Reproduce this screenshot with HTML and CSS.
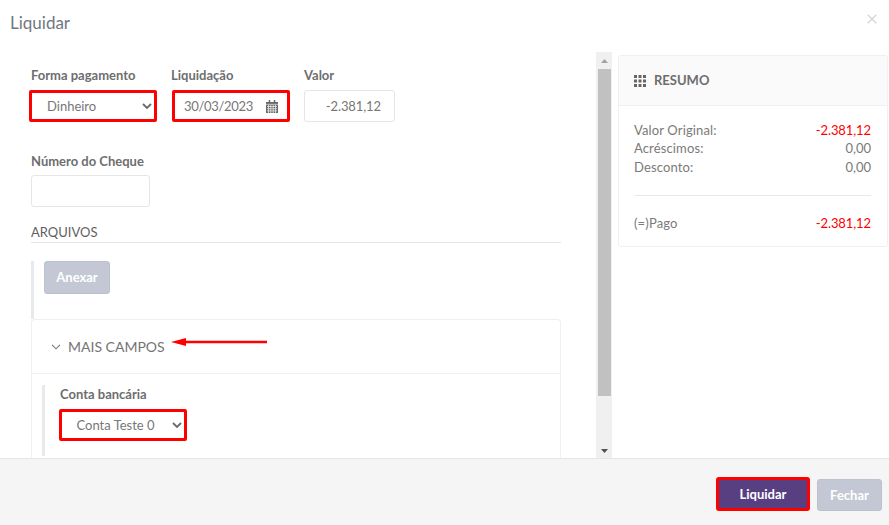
FILE: index.html
```html
<!DOCTYPE html>
<html lang="pt">
<head>
<meta charset="utf-8">
<title>Liquidar</title>
<link rel="stylesheet" href="styles.css">
</head>
<body>
<div class="modal">
  <header class="head">
    <h1 class="title">Liquidar</h1>
    <svg class="close" width="10" height="10" viewBox="0 0 10 10"><path d="M.7.7l8.6 8.6M9.3.7L.7 9.3" stroke="#d4d4d4" stroke-width="1.3" fill="none"/></svg>
  </header>
  <main class="main">
    <section class="pane">
      <div class="scroll">
        <div class="row">
          <div class="field f1">
            <label class="label">Forma pagamento</label>
            <div class="control marked sel-pay"><span>Dinheiro</span>
              <svg class="chev" width="10" height="7" viewBox="0 0 10 7"><path d="M1 1l4 4 4-4" stroke="#6a6a6a" stroke-width="1.800" fill="none"/></svg>
            </div>
          </div>
          <div class="field f2">
            <label class="label">Liquidação</label>
            <div class="control marked sel-date"><span class="digits">30/03/2023</span>
              <svg class="cal" width="12" height="13" viewBox="0 0 13 13" preserveAspectRatio="none"><path fill="#666" d="M0 2h13v11H0z"/><path fill="#666" d="M3 0h1.500v3H3zM8.500 0H10v3H8.500z"/><path stroke="#fff" stroke-width=".7" d="M0 4.300h13M1 6.500h11M1 8.700h11M1 10.900h11M2.700 5v8M5.200 5v8M7.800 5v8M10.300 5v8"/></svg>
            </div>
          </div>
          <div class="field f3">
            <label class="label">Valor</label>
            <div class="control plain num"><span class="amount">-2.381,12</span></div>
          </div>
        </div>
        <div class="field cheque">
          <label class="label">Número do Cheque</label>
          <div class="control plain wide"></div>
        </div>
        <h2 class="section">ARQUIVOS</h2>
        <div class="attach"><button class="btn muted anexar" type="button">Anexar</button></div>
        <div class="panel">
          <div class="panel-head">
            <svg class="fold" width="10" height="6" viewBox="0 0 10 6"><path d="M1 .8l4 4 4-4" stroke="#777" stroke-width="1.100" fill="none"/></svg>
            <span>MAIS CAMPOS</span>
            <svg class="arrow" width="97" height="10" viewBox="0 0 97 10"><path d="M0 5l15-4v2.800h81v2.400H15V9z" fill="#f00"/></svg>
          </div>
          <div class="panel-body">
            <div class="bank">
              <label class="label">Conta bancária</label>
              <div class="control marked sel-bank"><span>Conta Teste 0</span>
                <svg class="chev" width="10" height="7" viewBox="0 0 10 7"><path d="M1 1l4 4 4-4" stroke="#6a6a6a" stroke-width="1.800" fill="none"/></svg>
              </div>
            </div>
          </div>
        </div>
      </div>
      <div class="bar">
        <svg width="7" height="4" viewBox="0 0 7 4"><path d="M3.500 0L7 4H0z" fill="#a3a3a3"/></svg>
        <div class="thumb"></div>
        <svg class="down" width="7" height="4" viewBox="0 0 7 4"><path d="M0 0h7L3.500 4z" fill="#505050"/></svg>
      </div>
    </section>
    <aside class="side">
      <div class="card">
        <div class="card-head">
          <svg width="12" height="12" viewBox="0 0 12 12" fill="#666"><path d="M0 0h3v3H0zM4.500 0h3v3h-3zM9 0h3v3H9zM0 4.500h3v3H0zM4.500 4.500h3v3h-3zM9 4.500h3v3H9zM0 9h3v3H0zM4.500 9h3v3h-3zM9 9h3v3H9z"/></svg>
          <span class="card-title">RESUMO</span>
        </div>
        <div class="card-body">
          <div class="line"><span class="term">Valor Original:</span><span class="neg amount">-2.381,12</span></div>
          <div class="line"><span class="term">Acréscimos:</span><span>0,00</span></div>
          <div class="line"><span class="term">Desconto:</span><span>0,00</span></div>
          <hr class="rule">
          <div class="line"><span class="term">(=)Pago</span><span class="neg amount">-2.381,12</span></div>
        </div>
      </div>
    </aside>
  </main>
  <footer class="foot">
    <button class="btn primary" type="button">Liquidar</button>
    <button class="btn muted fechar" type="button">Fechar</button>
  </footer>
</div>
</body>
</html>
```
FILE: styles.css
```css
* { box-sizing: border-box; }
html, body { margin: 0; height: 100%; }
body { font-family: Lato, "Liberation Sans", sans-serif; font-size: 13px; color: #676a6c; background: #fff; overflow: hidden; }
.modal { height: 525px; display: flex; flex-direction: column; }

.head { height: 52px; flex: none; display: flex; justify-content: space-between; align-items: flex-start; padding: 13px 12px 0 10px; }
.title { margin: 0; font-size: 17px; line-height: 20px; font-weight: 400; color: #6f7882; }
.close { margin-top: 1px; }

.main { flex: 1; min-height: 0; display: flex; }
.pane { width: 612px; flex: none; display: flex; }
.scroll { width: 596px; flex: none; overflow: hidden; padding: 15px 35px 0 31px; }

.bar { width: 16px; flex: none; background: #f0f0f0; display: flex; flex-direction: column; align-items: center; padding-top: 7px; padding-bottom: 5px; }
.thumb { width: 13px; height: 327px; margin-top: 6px; background: #c1c1c1; }
.down { margin-top: auto; }

.row { display: flex; }
.field { display: flex; flex-direction: column; }
.f1 { width: 140px; }
.f2 { width: 133px; }
.label { font-weight: 700; color: #6e6e6e; line-height: 16px; }
.control { display: flex; align-items: center; height: 32px; margin-top: 7px; color: #777; background: #fff; }
.plain { border: 1px solid #e5e6e7; border-radius: 3px; }
.marked { border: 3px solid #f00; border-radius: 2px; justify-content: space-between; }
.sel-pay { width: 128px; margin-left: -2px; padding: 0 2px 0 15px; }
.sel-date { width: 118px; margin-left: 1px; padding: 0 9px 0 9px; }
.digits { letter-spacing: -.3px; }
.amount { letter-spacing: -.1px; }
.num { width: 91px; justify-content: flex-end; padding-right: 13px; }
.cheque { margin-top: 31px; }
.cheque .control { margin-top: 6px; }
.wide { width: 119px; }

.section { margin: 17px 0 0; height: 19px; font-size: 13px; line-height: 16px; font-weight: 400; color: #5f5f5f; border-bottom: 1px solid #e5e6e7; }
.attach { margin-top: 18px; height: 58px; border-left: 3px solid #e7eaec; padding-left: 10px; }

.btn { border: 0; border-radius: 3px; font: 700 13px/1 Lato, "Liberation Sans", sans-serif; color: #fff; }
.muted { background: #c3c8d4; border: 1px solid #bcc1ce; }
.anexar { width: 66px; height: 33px; display: block; padding-bottom: 1px; }
.primary { width: 94px; height: 34px; background: #583f82; border: 3px solid #f00; }
.fechar { width: 65px; height: 32px; margin-top: 2px; }

.panel { border: 1px solid #f0f0f0; border-radius: 4px 4px 0 0; border-bottom: 0; height: 160px; }
.panel-head { position: relative; height: 54px; display: flex; align-items: center; padding-left: 19px; border-bottom: 1px solid #f0f0f0; color: #747474; }
.panel-head span { margin-left: 7px; font-size: 14px; }
.arrow { position: absolute; left: 139px; top: 17px; }
.panel-body { padding: 11px 0 0 10px; }
.bank { height: 71px; border-left: 3px solid #e7eaec; padding-left: 15px; padding-top: 1px; }
.sel-bank { width: 128px; margin-left: -1px; padding: 0 2px 0 14.500px; }
.sel-bank.control { margin-top: 7px; }

.side { flex: 1; padding: 3px 1px 0 6px; }
.card { height: 192px; border: 1px solid #eff0f1; border-radius: 3px; }
.card-head { height: 50px; display: flex; align-items: center; gap: 8px; padding-left: 15px; background: #fafafa; border-bottom: 1px solid #eff0f1; color: #6e6e6e; }
.card-title { font-weight: 700; margin-top: -2px; }
.card-body { padding: 15px 16px 0 15px; }
.line { display: flex; justify-content: space-between; line-height: 18.300px; color: #7a7a7a; }
.term { letter-spacing: .14px; }
.neg { color: #f00; }
.rule { margin: 19px 0 18.500px; border: 0; border-top: 1px solid #e9e9e9; }

.foot { height: 67px; flex: none; display: flex; justify-content: flex-end; align-items: flex-start; gap: 7px; padding: 18px 7px 0 0; background: #f5f5f5; border-top: 1px solid #e5e5e5; }
```
